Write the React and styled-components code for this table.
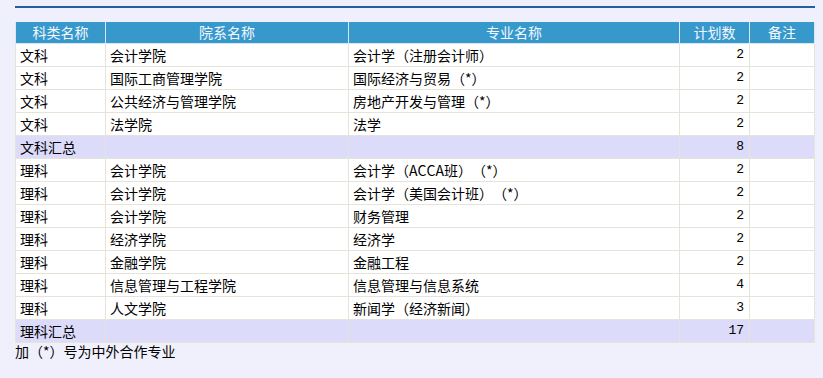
import React from 'react';
import styled, { createGlobalStyle } from 'styled-components';

const GlobalStyle = createGlobalStyle`
  html, body {
    margin: 0;
    padding: 0;
    background: #f0f0fc;
  }
  body {
    font-family: "Noto Sans CJK SC", "Liberation Sans", sans-serif;
    font-size: 14px;
    color: #000;
    text-spacing-trim: space-all;
    font-kerning: none;
  }
`;

const rows = [
  ['文科', '会计学院', '会计学（注册会计师）', '2'],
  ['文科', '国际工商管理学院', '国际经济与贸易（*）', '2'],
  ['文科', '公共经济与管理学院', '房地产开发与管理（*）', '2'],
  ['文科', '法学院', '法学', '2'],
  ['文科汇总', '', '', '8', true],
  ['理科', '会计学院', '会计学（ACCA班）（*）', '2'],
  ['理科', '会计学院', '会计学（美国会计班）（*）', '2'],
  ['理科', '会计学院', '财务管理', '2'],
  ['理科', '经济学院', '经济学', '2'],
  ['理科', '金融学院', '金融工程', '2'],
  ['理科', '信息管理与工程学院', '信息管理与信息系统', '4'],
  ['理科', '人文学院', '新闻学（经济新闻）', '3'],
  ['理科汇总', '', '', '17', true],
];

export default function App() {
  return (
    <Page>
      <GlobalStyle />
      <TopRule />
      <Table>
        <colgroup>
          <col style={{ width: 90 }} />
          <col style={{ width: 243 }} />
          <col style={{ width: 331 }} />
          <col style={{ width: 70 }} />
          <col style={{ width: 65 }} />
        </colgroup>
        <thead>
          <tr>
            <Th>科类名称</Th>
            <Th>院系名称</Th>
            <Th>专业名称</Th>
            <Th>计划数</Th>
            <Th>备注</Th>
          </tr>
        </thead>
        <tbody>
          {rows.map((r, i) => (
            <Row key={i} $total={r[4]}>
              <Td>{r[0]}</Td>
              <Td>{r[1]}</Td>
              <Td>{r[2]}</Td>
              <Td $num>{r[3]}</Td>
              <Td></Td>
            </Row>
          ))}
        </tbody>
      </Table>
      <Note>加（*）号为中外合作专业</Note>
    </Page>
  );
}

const Page = styled.div`
  padding: 6px 0 0 15px;
  width: 800px;
`;

const TopRule = styled.div`
  height: 2px;
  background: #1f5fa6;
  margin-bottom: 14px;
`;

const Table = styled.table`
  width: 800px;
  table-layout: fixed;
  border-collapse: collapse;
  border-right: 1px solid #a6a6b4;
  border-bottom: 1px solid #a6a6b4;
`;

const Th = styled.th`
  height: 21px;
  padding: 0;
  background: #3798cc;
  color: #f4f8ff;
  font-weight: normal;
  text-align: center;
  border: 1px solid #d8e8f2;
  border-top: none;
  line-height: 21px;
  white-space: nowrap;
`;

const Row = styled.tr`
  background: ${(p) => (p.$total ? '#dcdcfa' : '#ffffff')};
`;

const Td = styled.td`
  height: 22px;
  padding: 0 5px 0 4px;
  line-height: 22px;
  border: 1px solid #e6e4d8;
  text-align: ${(p) => (p.$num ? 'right' : 'left')};
  font-family: ${(p) => (p.$num ? '"Liberation Mono", monospace' : 'inherit')};
  font-size: ${(p) => (p.$num ? '13px' : '14px')};
  white-space: nowrap;
  overflow: hidden;
`;

const Note = styled.div`
  line-height: 17px;
`;
